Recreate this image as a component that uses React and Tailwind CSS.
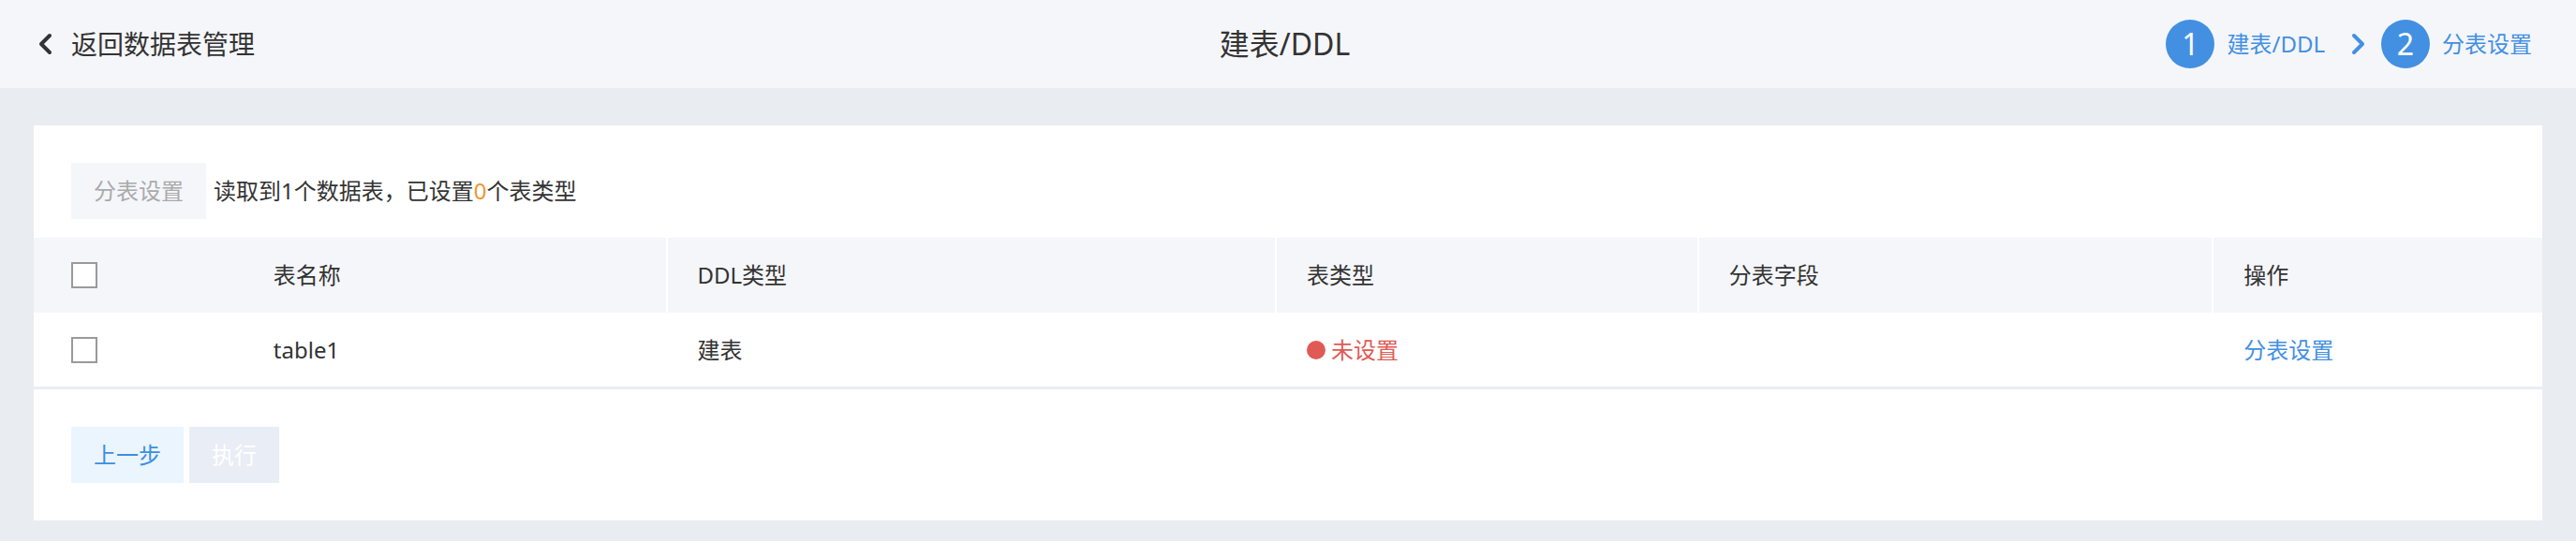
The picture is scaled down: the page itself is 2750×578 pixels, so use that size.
import React from 'react';

const cols = [
  { key: 'check', w: 'w-[224px]' },
  { key: 'name', w: 'w-[451px]', label: '表名称' },
  { key: 'ddl', w: 'w-[651px]', label: 'DDL类型' },
  { key: 'type', w: 'w-[451px]', label: '表类型' },
  { key: 'field', w: 'w-[550px]', label: '分表字段' },
  { key: 'op', w: 'w-[353px]', label: '操作' },
];

function Checkbox() {
  return <span className="block w-[28px] h-[28px] border-2 border-[#9a9a9a] bg-white" />;
}

function Step({ num, label }) {
  return (
    <div className="flex items-center gap-[13px]">
      <span className="w-[52px] h-[52px] rounded-full bg-[#4390e2] text-white text-[32px] leading-none flex items-center justify-center">
        {num}
      </span>
      <span className="text-[24px] text-[#4390e2] leading-none">{label}</span>
    </div>
  );
}

export default function App() {
  return (
    <div
      className="w-[2750px] h-[578px] bg-[#e9ecf0] text-[#333] overflow-hidden"
      style={{ fontFamily: '"Noto Sans", "Noto Sans CJK SC", sans-serif' }}
    >
      {/* top bar */}
      <div className="h-[94px] bg-[#f5f6fa] grid grid-cols-3 items-center pl-[40px] pr-[47px]">
        <div className="flex items-center gap-[20px]">
          <svg width="16" height="24" viewBox="0 0 16 24" fill="none" stroke="#333" strokeWidth="4" strokeLinecap="round" strokeLinejoin="round">
            <polyline points="13,3 4,12 13,21" />
          </svg>
          <span className="text-[28px] leading-none">返回数据表管理</span>
        </div>
        <div className="flex justify-center">
          <span className="text-[32px] leading-none">建表/DDL</span>
        </div>
        <div className="flex items-center justify-end">
          <Step num="1" label="建表/DDL" />
          <svg className="ml-[28px] mr-[16px]" width="16" height="24" viewBox="0 0 16 24" fill="none" stroke="#4390e2" strokeWidth="4" strokeLinecap="round" strokeLinejoin="round">
            <polyline points="3,3 12,12 3,21" />
          </svg>
          <Step num="2" label="分表设置" />
        </div>
      </div>

      <div className="px-[36px] pt-[40px]">
        <div className="bg-white">
          <div className="flex items-center gap-[8px] px-[40px] pt-[40px] pb-[20px]">
            <button className="h-[60px] px-[24px] bg-[#f5f6fa] text-[#aaaaaa] text-[24px] leading-none">分表设置</button>
            <span className="text-[24px] leading-none">
              读取到1个数据表，已设置<span className="text-[#f0962e]">0</span>个表类型
            </span>
          </div>

          {/* table header */}
          <div className="flex h-[80px] bg-[#f5f6fa] text-[24px]">
            {cols.map((c, i) => (
              <div
                key={c.key}
                className={`${c.w} flex items-center ${i === 0 ? 'pl-[40px]' : 'pl-[32px]'} ${i >= 2 ? 'border-l-2 border-white' : ''}`}
              >
                {c.key === 'check' ? <Checkbox /> : <span className="leading-none">{c.label}</span>}
              </div>
            ))}
          </div>

          {/* table row */}
          <div className="flex h-[82px] border-b-[3px] border-[#e9edf5] text-[24px]">
            <div className="w-[224px] flex items-center pl-[40px]"><Checkbox /></div>
            <div className="w-[451px] flex items-center pl-[32px] leading-none">table1</div>
            <div className="w-[651px] flex items-center pl-[34px] leading-none">建表</div>
            <div className="w-[451px] flex items-center pl-[34px] gap-[6px] text-[#e05a55] leading-none">
              <span className="w-[20px] h-[20px] rounded-full bg-[#e05a55]" />
              未设置
            </div>
            <div className="w-[550px]" />
            <div className="w-[353px] flex items-center pl-[34px] text-[#4390e2] leading-none">分表设置</div>
          </div>

          <div className="flex gap-[6px] p-[40px]">
            <button className="h-[60px] px-[24px] bg-[#eaf5fd] text-[#3d8fe0] text-[24px] leading-none">上一步</button>
            <button className="h-[60px] px-[24px] bg-[#e9edf5] text-white text-[24px] leading-none">执行</button>
          </div>
        </div>
      </div>
    </div>
  );
}
